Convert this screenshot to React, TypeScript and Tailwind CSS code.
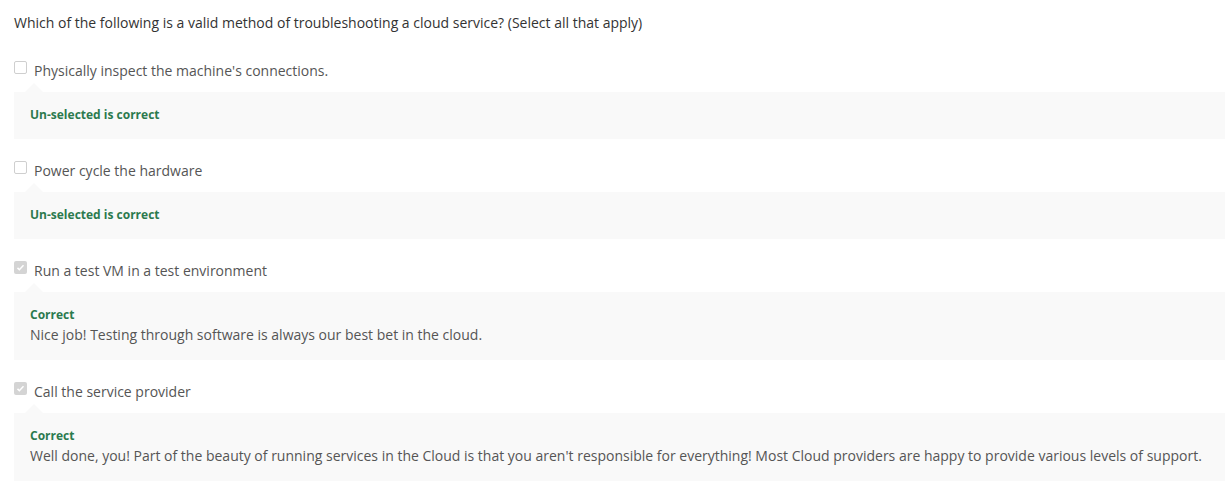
import React from "react";

type Item = {
  label: string;
  checked: boolean;
  verdict: string;
  note?: string;
};

const items: Item[] = [
  { label: "Physically inspect the machine's connections.", checked: false, verdict: "Un-selected is correct" },
  { label: "Power cycle the hardware", checked: false, verdict: "Un-selected is correct" },
  {
    label: "Run a test VM in a test environment",
    checked: true,
    verdict: "Correct",
    note: "Nice job! Testing through software is always our best bet in the cloud.",
  },
  {
    label: "Call the service provider",
    checked: true,
    verdict: "Correct",
    note: "Well done, you! Part of the beauty of running services in the Cloud is that you aren't responsible for everything! Most Cloud providers are happy to provide various levels of support.",
  },
];

function Box({ checked }: { checked: boolean }) {
  if (checked) {
    return (
      <span className="flex h-[13px] w-[13px] shrink-0 items-center justify-center rounded-[2px] bg-[#d4d4d4]">
        <svg viewBox="0 0 12 12" className="h-[9px] w-[9px]" fill="none" stroke="#fff" strokeWidth="2">
          <path d="M2 6.5l2.5 2.5L10 3" />
        </svg>
      </span>
    );
  }
  return <span className="block h-[13px] w-[13px] shrink-0 rounded-[2px] border border-[#cfcfcf] bg-white" />;
}

function Option({ item }: { item: Item }) {
  return (
    <div>
      <div className="flex items-start gap-[7px] text-[14px] leading-[20px] text-[#555]">
        <Box checked={item.checked} />
        <span>{item.label}</span>
      </div>
      <div className="relative mt-[11px] bg-[#f9f9f9] pb-[15px] pl-[16px] pt-[14px]">
        <span className="absolute -top-[9px] left-[11px] h-0 w-0 border-x-[9px] border-b-[9px] border-x-transparent border-b-[#f9f9f9]" />
        <div className="text-[12px] font-bold leading-[17px] text-[#2b7a4e]">{item.verdict}</div>
        {item.note && <div className="mt-[2px] text-[14px] leading-[20px] text-[#555]">{item.note}</div>}
        {!item.note && <div className="h-[1px]" />}
      </div>
    </div>
  );
}

export default function App() {
  return (
    <div className="min-h-screen bg-white pl-[14px] pt-[13px] font-['Open_Sans',sans-serif]">
      <p className="text-[14px] leading-[20px] text-[#333]">
        Which of the following is a valid method of troubleshooting a cloud service? (Select all that apply)
      </p>
      <div className="mt-[28px] flex flex-col gap-[22px]">
        {items.map((it) => (
          <Option key={it.label} item={it} />
        ))}
      </div>
    </div>
  );
}
